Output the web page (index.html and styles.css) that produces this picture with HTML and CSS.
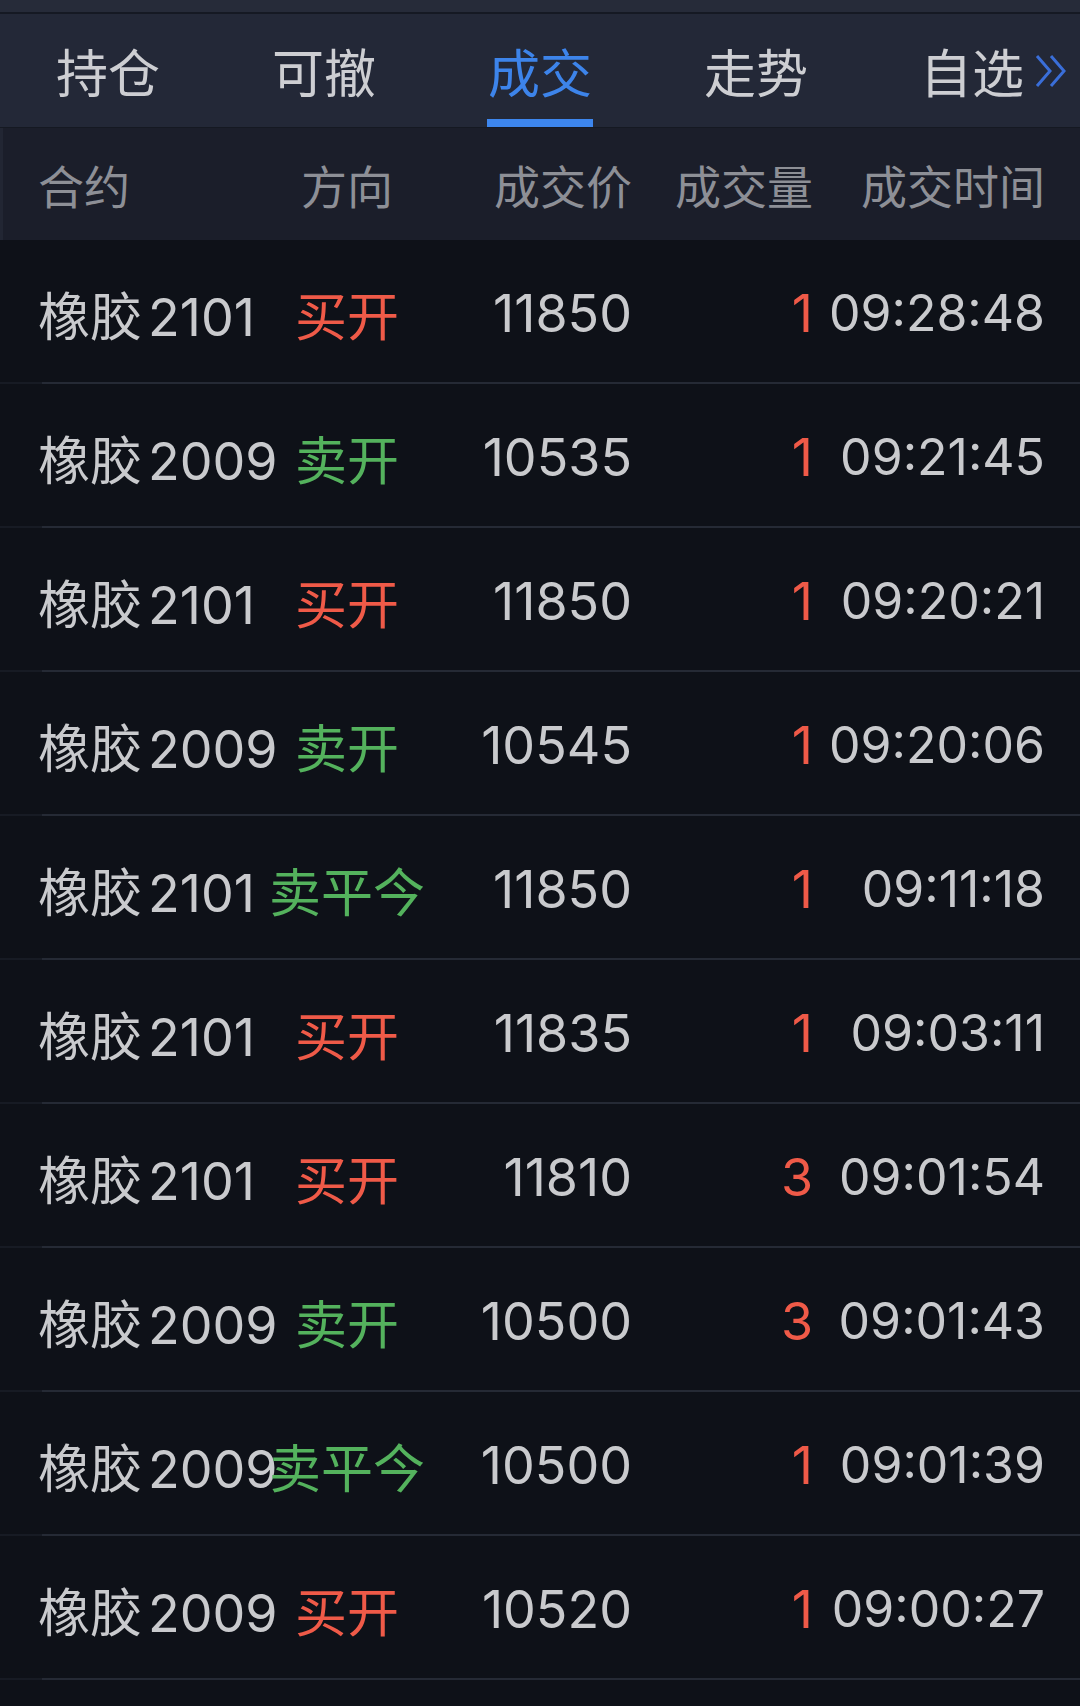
FILE: index.html
```html
<!DOCTYPE html>
<html lang="zh-CN">
<head>
  <meta charset="UTF-8" />
  <title>成交</title>
  <link rel="stylesheet" href="styles.css">
</head>
<body>
  <div class="status-strip"></div>

  <nav class="tabs">
    <div class="tab">持仓</div>
    <div class="tab">可撤</div>
    <div class="tab active">成交</div>
    <div class="tab">走势</div>
    <div class="tab more">自选
      <svg class="more-arrow" viewBox="0 0 32 34" width="32" height="34">
        <polyline points="2,2 15,17 2,32" />
        <polyline points="16,2 29,17 16,32" />
      </svg>
    </div>
  </nav>

  <div class="thead">
    <span class="c-name">合约</span>
    <span class="c-dir">方向</span>
    <span class="c-price">成交价</span>
    <span class="c-qty">成交量</span>
    <span class="c-time">成交时间</span>
  </div>

  <ul class="trades">
    <li class="trade">
      <span class="c-name">橡胶<span class="code">2101</span></span>
      <span class="c-dir buy">买开</span>
      <span class="c-price">11850</span>
      <span class="c-qty">1</span>
      <span class="c-time">09:28:48</span>
    </li>
    <li class="trade">
      <span class="c-name">橡胶<span class="code">2009</span></span>
      <span class="c-dir sell">卖开</span>
      <span class="c-price">10535</span>
      <span class="c-qty">1</span>
      <span class="c-time">09:21:45</span>
    </li>
    <li class="trade">
      <span class="c-name">橡胶<span class="code">2101</span></span>
      <span class="c-dir buy">买开</span>
      <span class="c-price">11850</span>
      <span class="c-qty">1</span>
      <span class="c-time">09:20:21</span>
    </li>
    <li class="trade">
      <span class="c-name">橡胶<span class="code">2009</span></span>
      <span class="c-dir sell">卖开</span>
      <span class="c-price">10545</span>
      <span class="c-qty">1</span>
      <span class="c-time">09:20:06</span>
    </li>
    <li class="trade">
      <span class="c-name">橡胶<span class="code">2101</span></span>
      <span class="c-dir sell">卖平今</span>
      <span class="c-price">11850</span>
      <span class="c-qty">1</span>
      <span class="c-time">09:11:18</span>
    </li>
    <li class="trade">
      <span class="c-name">橡胶<span class="code">2101</span></span>
      <span class="c-dir buy">买开</span>
      <span class="c-price">11835</span>
      <span class="c-qty">1</span>
      <span class="c-time">09:03:11</span>
    </li>
    <li class="trade">
      <span class="c-name">橡胶<span class="code">2101</span></span>
      <span class="c-dir buy">买开</span>
      <span class="c-price">11810</span>
      <span class="c-qty">3</span>
      <span class="c-time">09:01:54</span>
    </li>
    <li class="trade">
      <span class="c-name">橡胶<span class="code">2009</span></span>
      <span class="c-dir sell">卖开</span>
      <span class="c-price">10500</span>
      <span class="c-qty">3</span>
      <span class="c-time">09:01:43</span>
    </li>
    <li class="trade">
      <span class="c-name">橡胶<span class="code">2009</span></span>
      <span class="c-dir sell">卖平今</span>
      <span class="c-price">10500</span>
      <span class="c-qty">1</span>
      <span class="c-time">09:01:39</span>
    </li>
    <li class="trade">
      <span class="c-name">橡胶<span class="code">2009</span></span>
      <span class="c-dir buy">买开</span>
      <span class="c-price">10520</span>
      <span class="c-qty">1</span>
      <span class="c-time">09:00:27</span>
    </li>
  </ul>
</body>
</html>
```

FILE: styles.css
```css
body {
  margin: 0;
  background-color: #0e1118;
  font-family: Inter, "Noto Sans CJK SC", sans-serif;
  color: #c9cacd;
}

.status-strip {
  height: 12px;
  background-color: #262b39;
  border-bottom: 2px solid #151923;
}

.tabs {
  display: flex;
  height: 113px;
  background-color: #232837;
  border-bottom: 1px solid #151922;
}

.tab {
  flex: 1;
  position: relative;
  display: flex;
  align-items: center;
  justify-content: center;
  font-size: 52px;
  color: #cdced2;
}

.tab.active {
  color: #3d84ea;
}

.tab.active::after {
  content: "";
  position: absolute;
  bottom: 0;
  left: 50%;
  transform: translateX(-50%);
  width: 106px;
  height: 8px;
  background-color: #3d86ee;
}

.more-arrow {
  position: absolute;
  left: calc(50% + 63px);
  top: 40px;
  fill: none;
  stroke: #3a6ed8;
  stroke-width: 3;
}

.thead,
.trade {
  display: grid;
  grid-template-columns: 200px 218px 176px 181px 232px;
  align-items: center;
  padding: 0 35px 0 38px;
  white-space: nowrap;
}

.thead {
  height: 112px;
  background-color: #1b1e2a;
  border-left: 3px solid #222633;
  padding-left: 35px;
  padding-right: 37px;
  font-size: 46px;
  color: #8d8f96;
}

.trades {
  list-style: none;
  margin: 0;
  padding: 0;
}

.trade {
  position: relative;
  box-sizing: border-box;
  height: 144px;
  padding-top: 4px;
  font-size: 52px;
  border-bottom: 2px solid #171b24;
}

.trade::after {
  content: "";
  position: absolute;
  left: 42px;
  right: 0;
  bottom: -2px;
  height: 2px;
  background-color: #252a35;
}

.code {
  margin-left: 6px;
}

.c-dir {
  text-align: center;
}

.c-price,
.c-qty,
.c-time {
  text-align: right;
}

.trade .c-time {
  font-size: 50px;
}

.buy,
.trade .c-qty {
  color: #ef5a48;
}

.sell {
  color: #54b25d;
}
```
